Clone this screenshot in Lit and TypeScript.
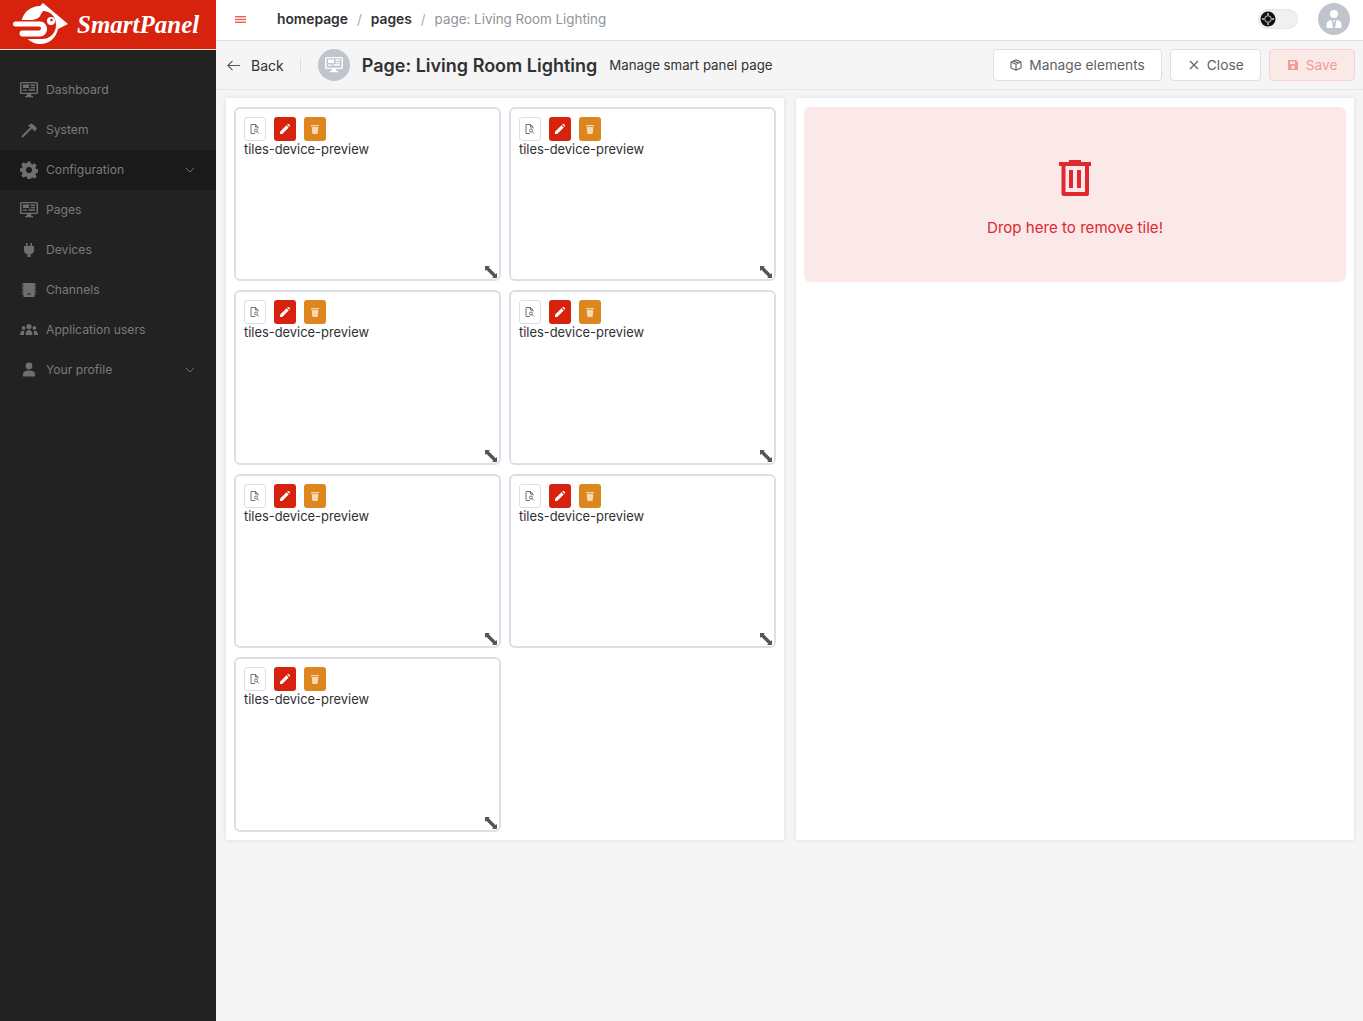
import { LitElement, html, css, svg } from 'lit';
import { customElement } from 'lit/decorators.js';

const monitor = svg`<path fill="currentColor" fill-rule="evenodd" d="M1.500 1h15A1.500 1.500 0 0 1 18 2.500v9a1.500 1.500 0 0 1-1.500 1.500H11l.5 2H13v1.300H5V15h1.500l.5-2H1.500A1.500 1.500 0 0 1 0 11.500v-9A1.500 1.500 0 0 1 1.500 1Zm0 1.300v9.400h15V2.300ZM3 3.500h6V7H3Zm7.500 0H15V5h-4.500Zm0 2.500H15v1.200h-4.500ZM3 8.500h4v1.200H3Zm5.500-.2H15v1.500H8.500Z"/>`;

const navIcons: Record<string, unknown> = {
  dashboard: monitor,
  hammer: svg`<path fill="currentColor" d="M8 4.500 11.500 2.500 13 3.500 16 6 16.800 8 14.500 10.500 13 8.500 10.500 6.500Z"/><path fill="none" stroke="currentColor" stroke-width="2" stroke-linecap="round" d="M2.500 15.500 11 7"/>`,
  gear: svg`<path fill="currentColor" fill-rule="evenodd" d="M7.500 0h3l.5 2.300 1.500.7 2-1.300 2.200 2.200-1.300 2 .6 1.500 2.300.5v3.200l-2.300.5-.6 1.500 1.300 2-2.200 2.200-2-1.300-1.500.6-.5 2.400h-3L7 15.600l-1.500-.6-2 1.300-2.200-2.200 1.300-2-.6-1.500L0 10.100V6.900l2-.5.600-1.500-1.300-2L3.500.700l2 1.300L7 1.400ZM9 5.500a3 3 0 1 0 0 6 3 3 0 0 0 0-6Z" transform="translate(0 .5)"/>`,
  plug: svg`<path fill="currentColor" d="M6 2h1.500v3h3V2H12v3h2v4c0 2.500-1.500 4-3.500 4.300V16h-3v-2.700C5.500 13 4 11.500 4 9V5h2Z"/>`,
  chip: svg`<path fill="currentColor" fill-rule="evenodd" d="M3.500 2h11v14h-11ZM9.500 12v2h1v-2Zm-2 0v2h1v-2ZM2 2.800h1.500v1.200H2Zm0 2.400h1.500v1.200H2Zm0 2.400h1.500v1.200H2ZM2 10h1.500v1.200H2Zm0 2.400h1.500v1.200H2Zm12.500-9.600H16v1.200h-1.500Zm0 2.400H16v1.200h-1.500Zm0 2.400H16v1.200h-1.500Zm0 2.400H16v1.200h-1.500Zm0 2.400H16v1.200h-1.500Z"/>`,
  users: svg`<path fill="currentColor" d="M9 3a2.600 2.600 0 1 1 0 5.200A2.600 2.600 0 0 1 9 3ZM3.600 5a1.900 1.900 0 1 1 0 3.800 1.900 1.900 0 0 1 0-3.800Zm10.800 0a1.900 1.900 0 1 1 0 3.800 1.900 1.900 0 0 1 0-3.800ZM5.500 14c0-3 1.500-5 3.500-5s3.500 2 3.500 5ZM0 14c0-2.300 1-4.300 3-4.300.5 0 1 .1 1.400.4C4 11 4 12.500 4 14Zm14 0c0-1.500 0-3-.4-3.900.4-.3.900-.4 1.400-.4 2 0 3 2 3 4.300Z"/>`,
  user: svg`<path fill="currentColor" d="M9 1.500a3.400 3.400 0 1 1 0 6.800 3.400 3.400 0 0 1 0-6.800ZM3 15.500v-2.300C3 10.800 5 9.500 9 9.500s6 1.300 6 3.700v2.300Z"/>`,
};

const navItems = [
  { label: 'Dashboard', icon: 'dashboard' },
  { label: 'System', icon: 'hammer' },
  { label: 'Configuration', icon: 'gear', open: true, chevron: true },
  { label: 'Pages', icon: 'dashboard' },
  { label: 'Devices', icon: 'plug' },
  { label: 'Channels', icon: 'chip' },
  { label: 'Application users', icon: 'users' },
  { label: 'Your profile', icon: 'user', chevron: true },
];

@customElement('app-root')
export class AppRoot extends LitElement {
  static styles = css`
    :host {
      display: block;
      height: 1021px;
      overflow: hidden;
      font-family: Inter, 'Liberation Sans', sans-serif;
      font-size: 14px;
      color: #303133;
      background: #f5f5f5;
    }

    .layout {
      display: flex;
      height: 100%;
    }

    /* Sidebar */
    .sidebar {
      width: 216px;
      flex-shrink: 0;
      background: #222222;
      display: flex;
      flex-direction: column;
    }

    .logo {
      height: 49px;
      background: #d7220e;
      border-bottom: 1px solid #f1d5d0;
      display: flex;
      align-items: center;
      padding-left: 12px;
      gap: 7px;
      color: #fff;
    }

    .logo svg {
      width: 58px;
      height: 44px;
      flex-shrink: 0;
    }

    .logo-text {
      font-family: 'Liberation Serif', serif;
      font-style: italic;
      font-weight: 700;
      font-size: 25px;
      line-height: 1;
    }

    .nav {
      margin-top: 20px;
      display: flex;
      flex-direction: column;
    }

    .nav-item {
      height: 40px;
      display: flex;
      align-items: center;
      padding: 0 20px;
      gap: 8px;
      color: #7a7a7a;
      font-size: 12.15px;
    }

    .nav-item.open {
      background: #1a1a1a;
    }

    .nav-icon {
      width: 18px;
      height: 18px;
      flex-shrink: 0;
      color: #6f6f6f;
    }

    .nav-label {
      flex: 1;
      padding-bottom: 1px;
    }

    .chevron {
      width: 10px;
      height: 6px;
      color: #6f6f6f;
      margin-right: 1px;
    }

    /* Main */
    .main {
      flex: 1;
      min-width: 0;
      display: flex;
      flex-direction: column;
    }

    .topbar {
      height: 38px;
      padding: 0 13px 2px 19px;
      background: #fff;
      border-bottom: 1px solid #dcdfe6;
      display: flex;
      align-items: center;
    }

    .burger {
      width: 11px;
      height: 7px;
      color: #e8604f;
      margin-right: 31px;
    }

    .crumbs {
      flex: 1;
      display: flex;
      align-items: center;
      font-size: 13.4px;
      color: #909399;
    }

    .crumbs b {
      font-size: 13.8px;
      font-weight: 600;
      color: #303133;
    }

    .crumbs .sep {
      margin: 0 9px;
      color: #a8abb2;
    }

    .switch {
      width: 40px;
      height: 20px;
      box-sizing: border-box;
      border: 1px solid #e4e7ed;
      border-radius: 10px;
      background: #f0f0f0;
      display: flex;
      align-items: center;
      margin-right: 20px;
    }

    .switch svg {
      width: 16px;
      height: 16px;
      margin-left: 1px;
    }

    .avatar {
      width: 32px;
      height: 32px;
      border-radius: 50%;
      background: #c0c4cc;
      color: #fff;
      display: flex;
      align-items: center;
      justify-content: center;
    }

    .avatar svg {
      width: 18px;
      height: 20px;
    }

    .toolbar {
      height: 48px;
      border-bottom: 1px solid #e4e7ed;
      display: flex;
      align-items: center;
      padding: 0 8px 0 11px;
    }

    .back {
      display: flex;
      align-items: center;
      gap: 11px;
      color: #303133;
      padding-right: 16px;
      border-right: 1px solid #dcdfe6;
      height: 14px;
    }

    .back svg {
      width: 13px;
      height: 11px;
      color: #55585e;
    }

    .page-icon {
      width: 32px;
      height: 32px;
      border-radius: 50%;
      background: #c0c4cc;
      color: #fff;
      display: flex;
      align-items: center;
      justify-content: center;
      margin-left: 17px;
    }

    .page-icon svg {
      width: 18px;
      height: 18px;
    }

    .title {
      font-size: 18px;
      font-weight: 600;
      color: #303133;
      margin-left: 12px;
      white-space: nowrap;
    }

    .subtitle {
      font-size: 13.25px;
      color: #303133;
      margin-left: 12px;
      flex: 1;
      white-space: nowrap;
    }

    .btn {
      height: 32px;
      box-sizing: border-box;
      border: 1px solid #dcdfe6;
      border-radius: 4px;
      background: #fff;
      color: #606266;
      display: inline-flex;
      align-items: center;
      justify-content: center;
      padding: 0 16.5px;
      gap: 7px;
      font-family: inherit;
      font-size: 13.75px;
      margin-left: 8px;
    }

    .btn svg {
      width: 12px;
      height: 12px;
    }

    .btn.save {
      background: #fbe9e7;
      border-color: #f8d3cf;
      color: #ef9d94;
    }

    /* Content */
    .content {
      display: grid;
      grid-template-columns: 558px 558px;
      gap: 12px;
      padding: 8px 9px 0 10px;
      align-items: start;
    }

    .card {
      background: #fff;
      height: 742px;
      box-sizing: border-box;
      padding: 9px 8px 8px;
      box-shadow: 0 0 4px rgba(0, 0, 0, 0.1);
    }

    .tiles {
      display: grid;
      grid-template-columns: 266.5px 266.5px;
      grid-auto-rows: 174.4px;
      gap: 9px 8.5px;
    }

    .tile {
      position: relative;
      box-sizing: border-box;
      border: 2px solid #dcdfe6;
      border-radius: 6px;
      padding: 8px;
      font-size: 12.9px;
      line-height: 16px;
      color: #303133;
    }

    .tile-actions {
      display: flex;
      gap: 8px;
      margin-bottom: 1px;
    }

    .tile-btn {
      width: 22px;
      height: 24px;
      box-sizing: border-box;
      border-radius: 3px;
      display: flex;
      align-items: center;
      justify-content: center;
      color: #fff;
    }

    .tile-btn svg {
      width: 10px;
      height: 10px;
    }

    .tile-btn.view {
      border: 1px solid #dcdfe6;
      background: #fff;
      color: #606266;
    }

    .tile-btn.edit {
      background: #d7220e;
    }

    .tile-btn.remove {
      background: #dd861d;
      color: #f6d9b3;
    }

    .resize {
      position: absolute;
      right: 1.5px;
      bottom: 1px;
      width: 12px;
      height: 12px;
      color: #555;
    }

    .drop {
      height: 174.5px;
      border-radius: 6px;
      background: #fbe9e9;
      color: #e0282e;
      display: flex;
      flex-direction: column;
      align-items: center;
      padding-top: 53px;
      box-sizing: border-box;
      font-size: 15.1px;
    }

    .drop svg {
      width: 32px;
      height: 36px;
      margin-bottom: 22px;
    }
  `;

  private renderTile() {
    return html`
      <div class="tile">
        <div class="tile-actions">
          <span class="tile-btn view">
            <svg viewBox="0 0 10 10" fill="none" stroke="currentColor" stroke-width="0.9">
              <path d="M5 9.500H1V.5h4.500L8 3v1.500M5.500.5V3H8" />
              <circle cx="6" cy="6.500" r="1.500" />
              <path d="m7.200 7.700 1.800 1.800" />
            </svg>
          </span>
          <span class="tile-btn edit">
            <svg viewBox="0 0 10 10">
              <path fill="currentColor" d="M0 10V7.800L6.500 1.300 8.700 3.500 2.200 10ZM7.200.6 7.800 0a.7.7 0 0 1 1 0L10 1.200a.7.700 0 0 1 0 1L9.400 2.800Z" />
            </svg>
          </span>
          <span class="tile-btn remove">
            <svg viewBox="0 0 10 10">
              <path fill="currentColor" d="M1 1h8v1.300H1Zm.7 2h6.600l-.5 6a1 1 0 0 1-1 1H3.200a1 1 0 0 1-1-1Z" />
            </svg>
          </span>
        </div>
        tiles-device-preview
        <svg class="resize" viewBox="0 0 12 12">
          <path fill="currentColor" d="M0 0h5L3.700 1.300 10.700 8.300 12 7v5H7l1.300-1.300L1.300 3.700 0 5Z" />
        </svg>
      </div>
    `;
  }

  render() {
    return html`
      <div class="layout">
        <aside class="sidebar">
          <div class="logo">
            <svg viewBox="0 0 58 44">
              <path fill="#fff" d="M31 0 56 21 46 26C44 35 37 41 28 41 18 41 10 33 9 21 10 9 19 3 28 3Z" />
              <path fill="#d7220e" d="M31 8C38 8 44 13 44 22 44 30 38 36 30 36H0V17H21C24 16 28 15 29 11Z" />
              <circle fill="#fff" cx="39" cy="18" r="4" />
              <circle fill="#d7220e" cx="39.500" cy="17" r="1.300" />
              <path fill="#fff" d="M3.500 18.500H28C32 18.500 35 22 35 26 35 30 32 33.500 28 33.500H10.500A3 3 0 0 1 10.500 27.500H27A2 2 0 0 0 27 23.500H3.500A2.500 2.500 0 0 1 3.500 18.500Z" />
            </svg>
            <span class="logo-text">SmartPanel</span>
          </div>
          <nav class="nav">
            ${navItems.map(
              (item) => html`
                <div class="nav-item ${item.open ? 'open' : ''}">
                  <svg class="nav-icon" viewBox="0 0 18 18">${navIcons[item.icon]}</svg>
                  <span class="nav-label">${item.label}</span>
                  ${item.chevron
                    ? html`<svg class="chevron" viewBox="0 0 10 6" fill="none" stroke="currentColor"><path d="m1 1 4 4 4-4" /></svg>`
                    : ''}
                </div>
              `,
            )}
          </nav>
        </aside>
        <main class="main">
          <header class="topbar">
            <svg class="burger" viewBox="0 0 11 7" fill="currentColor">
              <rect width="11" height="1.400" /><rect y="2.800" width="11" height="1.400" /><rect y="5.600" width="11" height="1.400" />
            </svg>
            <div class="crumbs">
              <b>homepage</b><span class="sep">/</span><b>pages</b><span class="sep">/</span><span>page: Living Room Lighting</span>
            </div>
            <div class="switch">
              <svg viewBox="0 0 16 16">
                <circle cx="8" cy="8" r="7.500" fill="#111" />
                <circle cx="8" cy="8" r="3.300" fill="none" stroke="#ccc" stroke-width="1" />
                <circle cx="8" cy="3" r="1" fill="#ccc" /><circle cx="8" cy="13" r="1" fill="#ccc" />
                <circle cx="3" cy="8" r="1" fill="#ccc" /><circle cx="13" cy="8" r="1" fill="#ccc" />
              </svg>
            </div>
            <div class="avatar">
              <svg viewBox="0 0 18 20" fill="currentColor">
                <circle cx="9" cy="5" r="4" />
                <path d="M1.500 19v-3.500c0-2.800 2-4.300 5-4.500L8 19ZM16.500 19v-3.500c0-2.800-2-4.300-5-4.500L10 19ZM8.200 11h1.600l-.3 2.500h-1Z" />
              </svg>
            </div>
          </header>
          <div class="toolbar">
            <div class="back">
              <svg viewBox="0 0 13 11" fill="none" stroke="currentColor" stroke-width="1.100"><path d="M5.500.8.800 5.500l4.700 4.700M1 5.500h12" /></svg>
              <span>Back</span>
            </div>
            <div class="page-icon"><svg viewBox="0 0 18 18">${monitor}</svg></div>
            <span class="title">Page: Living Room Lighting</span>
            <span class="subtitle">Manage smart panel page</span>
            <button class="btn">
              <svg viewBox="0 0 12 12" fill="none" stroke="currentColor" stroke-width="1.100"><path d="M6 .8 11 3v6l-5 2.200L1 9V3Zm-5 2.200 5 2.200L11 3M6 5.200v6M3.500 1.900l5 2.200" /></svg>
              Manage elements
            </button>
            <button class="btn">
              <svg viewBox="0 0 12 12" fill="none" stroke="currentColor" stroke-width="1.200"><path d="m2 2 8 8m0-8-8 8" /></svg>
              Close
            </button>
            <button class="btn save">
              <svg viewBox="0 0 12 12"><path fill="currentColor" fill-rule="evenodd" d="M1.500 1H9l2 2v7.500a.5.500 0 0 1-.5.500h-9a.5.500 0 0 1-.5-.5v-9a.5.500 0 0 1 .5-.5ZM3 2.500V5h5V2.500ZM6 6.500a1.700 1.700 0 1 0 0 3.400 1.700 1.700 0 0 0 0-3.400Z" /></svg>
              Save
            </button>
          </div>
          <div class="content">
            <section class="card">
              <div class="tiles">${Array.from({ length: 7 }, () => this.renderTile())}</div>
            </section>
            <section class="card">
              <div class="drop">
                <svg viewBox="0 0 32 36" fill="currentColor">
                  <path fill-rule="evenodd" d="M10 0h12v2h10v4H30v28a2 2 0 0 1-2 2H4.500a2 2 0 0 1-2-2V6H0V2h10ZM6.500 6v26H26V6ZM10 10h4v18h-4Zm8 0h4v18h-4Z" />
                </svg>
                Drop here to remove tile!
              </div>
            </section>
          </div>
        </main>
      </div>
    `;
  }
}

declare global {
  interface HTMLElementTagNameMap {
    'app-root': AppRoot;
  }
}
